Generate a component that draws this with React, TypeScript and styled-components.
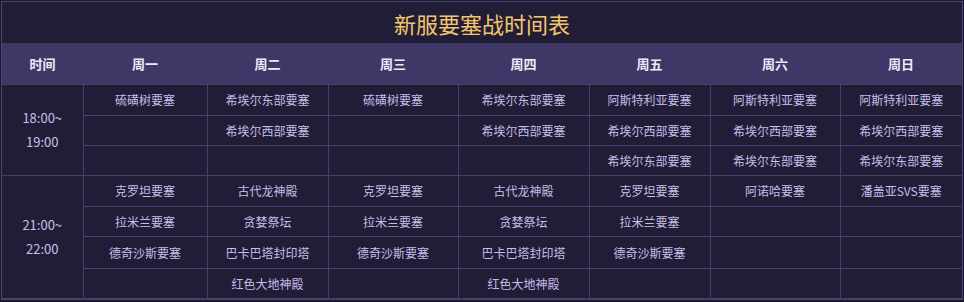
import React from "react";
import styled, { createGlobalStyle } from "styled-components";

const GlobalStyle = createGlobalStyle`
  html, body {
    margin: 0;
    padding: 0;
    background: #1c182e;
  }
  body {
    font-family: "Noto Sans CJK SC", "Noto Sans", sans-serif;
  }
`;

const Frame = styled.div`
  margin: 1px;
  border: 1px solid #4a4373;
  background: #221d37;
`;

const Title = styled.h1`
  margin: 0;
  height: 41px;
  display: flex;
  align-items: center;
  justify-content: center;
  font-size: 22px;
  font-weight: 400;
  color: #f3c66c;
`;

const Table = styled.table`
  width: 100%;
  table-layout: fixed;
  border-collapse: collapse;
`;

const HeadRow = styled.tr`
  background: #3f3867;
  height: 41px;
`;

const HeadCell = styled.th`
  font-size: 13px;
  font-weight: 700;
  color: #eeebf8;
  text-align: center;
  padding: 0;
`;

const Row = styled.tr<{ $h: number }>`
  height: ${(p) => p.$h}px;
`;

const TimeCell = styled.td`
  border: 1px solid #463f6c;
  border-left: none;
  text-align: center;
  font-size: 13px;
  line-height: 24px;
  color: #c8c0ea;
  padding: 0;
`;

const Cell = styled.td`
  border: 1px solid #463f6c;
  text-align: center;
  font-size: 12px;
  color: #c6bde9;
  padding: 0;
  white-space: nowrap;
  &:last-child {
    border-right: none;
  }
`;

const widths = [81, 124, 121, 130, 131, 121, 130, 122];
const heads = ["时间", "周一", "周二", "周三", "周四", "周五", "周六", "周日"];

type Group = { time: [string, string]; heights: number[]; days: string[][] };

const groups: Group[] = [
  {
    time: ["18:00~", "19:00"],
    heights: [31, 30, 30],
    days: [
      ["硫磺树要塞", "", ""],
      ["希埃尔东部要塞", "希埃尔西部要塞", ""],
      ["硫磺树要塞", "", ""],
      ["希埃尔东部要塞", "希埃尔西部要塞", ""],
      ["阿斯特利亚要塞", "希埃尔西部要塞", "希埃尔东部要塞"],
      ["阿斯特利亚要塞", "希埃尔西部要塞", "希埃尔东部要塞"],
      ["阿斯特利亚要塞", "希埃尔西部要塞", "希埃尔东部要塞"],
    ],
  },
  {
    time: ["21:00~", "22:00"],
    heights: [31, 30, 32, 30],
    days: [
      ["克罗坦要塞", "拉米兰要塞", "德奇沙斯要塞", ""],
      ["古代龙神殿", "贪婪祭坛", "巴卡巴塔封印塔", "红色大地神殿"],
      ["克罗坦要塞", "拉米兰要塞", "德奇沙斯要塞", ""],
      ["古代龙神殿", "贪婪祭坛", "巴卡巴塔封印塔", "红色大地神殿"],
      ["克罗坦要塞", "拉米兰要塞", "德奇沙斯要塞", ""],
      ["阿诺哈要塞", "", "", ""],
      ["潘盖亚SVS要塞", "", "", ""],
    ],
  },
];

export default function App() {
  return (
    <>
      <GlobalStyle />
      <Frame>
        <Title>新服要塞战时间表</Title>
        <Table>
          <colgroup>
            {widths.map((w, i) => (
              <col key={i} style={{ width: w }} />
            ))}
          </colgroup>
          <thead>
            <HeadRow>
              {heads.map((h) => (
                <HeadCell key={h}>{h}</HeadCell>
              ))}
            </HeadRow>
          </thead>
          <tbody>
            {groups.map((g, gi) =>
              g.heights.map((h, r) => (
                <Row key={`${gi}-${r}`} $h={h}>
                  {r === 0 && (
                    <TimeCell rowSpan={g.heights.length}>
                      {g.time[0]}
                      <br />
                      {g.time[1]}
                    </TimeCell>
                  )}
                  {g.days.map((d, di) => (
                    <Cell key={di}>{d[r]}</Cell>
                  ))}
                </Row>
              ))
            )}
          </tbody>
        </Table>
      </Frame>
    </>
  );
}
